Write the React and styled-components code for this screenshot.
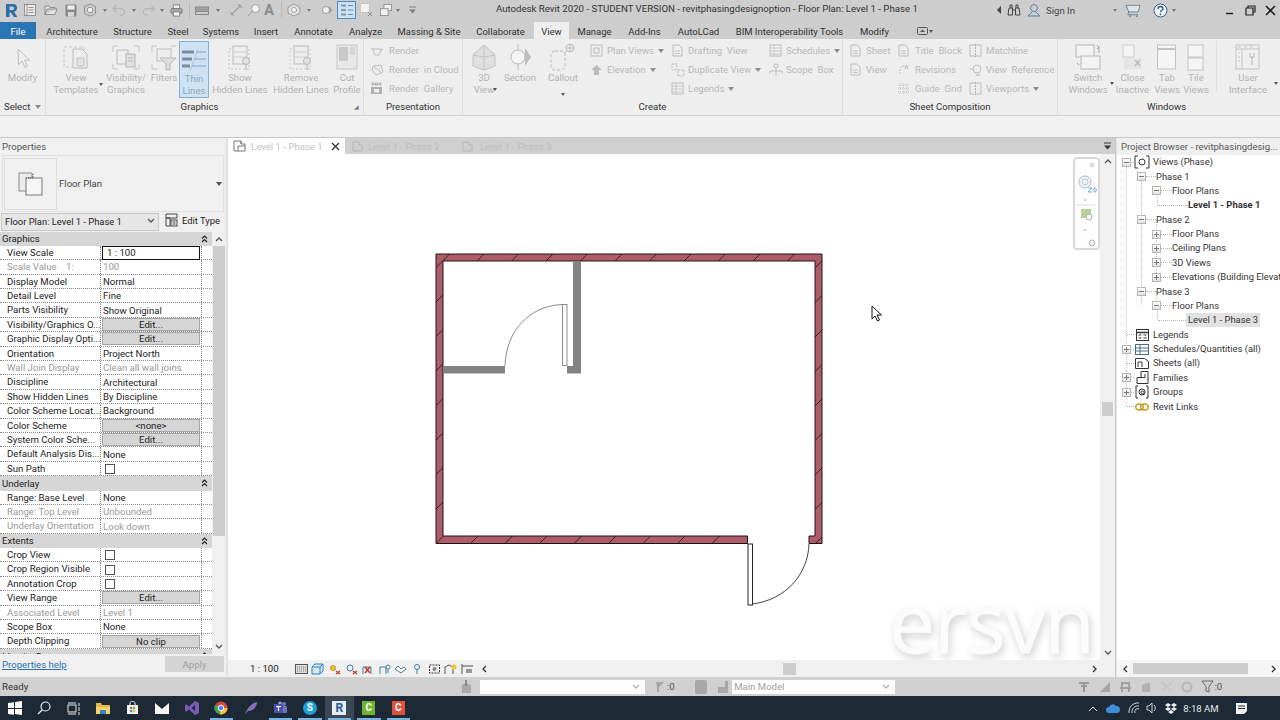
import React from 'react';
import styled, { createGlobalStyle } from 'styled-components';

const FONT = `Roboto, "Liberation Sans", sans-serif`;

const Global = createGlobalStyle`
  html, body { margin: 0; padding: 0; background: #f0f0f0; }
  body { font-family: ${FONT}; font-size: 9.600px; color: #222; overflow: hidden; }
  * { box-sizing: border-box; }
`;

const Page = styled.div`
  width: 1280px; height: 720px; display: flex; flex-direction: column; overflow: hidden;
`;

/* ---------- small drawing helper ---------- */
const Svg = ({ w = 14, h = 14, children, ...p }) => (
  <svg width={w} height={h} viewBox={`0 0 ${w} ${h}`} fill="none" {...p}>{children}</svg>
);

/* ---------- quick access icons ---------- */
const Q = {
  logo: () => <Svg w={13} h={15}><path d="M1 1h7c3 0 4 2 4 4s-1 3-3 4l3.500 5H9L6 9.500H4.500V14H1zM4.500 3.500v3.500H7.500c1.200 0 1.500-.800 1.500-1.800s-.5-1.700-1.500-1.700z" fill="#2a6da8"/></Svg>,
  list: () => <Svg w={12} h={12}><rect x=".5" y=".5" width="11" height="11" fill="#ececec" stroke="#8f8f8f"/><path d="M3 .5v11M4.500 3.500h5M4.500 6h5M4.500 8.500h5" stroke="#8f8f8f"/></Svg>,
  open: () => <Svg w={14} h={12}><path d="M1 10.500V2h4l1 1.500h5V5M1 10.500h10l2-5.500H3.200z" stroke="#8d8d8d" fill="#e3e3e3"/></Svg>,
  save: () => <Svg w={12} h={13}><rect x=".5" y=".5" width="11" height="12" rx="1" fill="#8a8a8a"/><rect x="2.500" y="1.500" width="7" height="4" fill="#efefef"/><rect x="3" y="8" width="6" height="4.500" fill="#d5d5d5"/></Svg>,
  cloud: () => <Svg w={14} h={14}><path d="M7 1l5.500 2.500v7L7 13l-5.500-2.500v-7z" fill="#cfcfcf" stroke="#909090"/><circle cx="7" cy="7" r="2.800" fill="#f2f2f2" stroke="#8d8d8d"/></Svg>,
  undo: () => <Svg w={14} h={12}><path d="M4 1L1 4.500 4 8M1.500 4.500H8c3 0 4.500 2 4.500 3.500S11 11.500 8 11.500" stroke="#b5b5b5" strokeWidth="1.300"/></Svg>,
  redo: () => <Svg w={14} h={12}><path d="M10 1l3 3.500L10 8M12.500 4.500H6C3 4.500 1.500 6.500 1.500 8S3 11.500 6 11.500" stroke="#b5b5b5" strokeWidth="1.300"/></Svg>,
  print: () => <Svg w={14} h={13}><rect x="3.500" y=".5" width="7" height="4" fill="#f3f3f3" stroke="#7c7c7c"/><rect x="1" y="4.500" width="12" height="5" rx="1" fill="#a9a9a9" stroke="#7c7c7c"/><rect x="3.500" y="8" width="7" height="4.500" fill="#f3f3f3" stroke="#7c7c7c"/></Svg>,
  measure: () => <Svg w={14} h={12}><rect x=".5" y="3" width="13" height="3" fill="#a6a6a6" stroke="#848484"/><rect x=".5" y="7.500" width="13" height="3" fill="#cdcdcd" stroke="#848484"/></Svg>,
  aligned: () => <Svg w={14} h={14}><path d="M2 12L12 2" stroke="#a4a4a4" strokeWidth="1.500"/><path d="M1 9l4 4M9 1l4 4" stroke="#8f8f8f"/></Svg>,
  tag: () => <Svg w={14} h={14}><circle cx="8.500" cy="5.500" r="4" stroke="#9c9c9c" fill="#f1f1f1"/><path d="M1 13l4.500-5" stroke="#9c9c9c"/></Svg>,
  letter: () => <LetterA>A</LetterA>,
  house: () => <Svg w={14} h={14}><path d="M7 1l6 3.500v5.500L7 13 1 10V4.500z" fill="#e4e4e4" stroke="#9a9a9a"/><circle cx="7" cy="7" r="2.500" stroke="#9a9a9a" fill="#fff"/></Svg>,
  diamond: () => <Svg w={12} h={14}><circle cx="5" cy="7" r="3.500" fill="#f4f4f4" stroke="#9a9a9a"/><path d="M8 3l3.500 4L8 11z" fill="#9f9f9f"/></Svg>,
  thin: () => <Svg w={14} h={14}><path d="M1 2.500h5M1 7h5M1 11.500h5" stroke="#7f98ae" strokeWidth="2"/><path d="M8 2.500h5M8 7h5M8 11.500h5" stroke="#5d8fbd"/></Svg>,
  closew: () => <Svg w={14} h={14}><rect x=".5" y=".5" width="9" height="9" fill="#f2f2f2" stroke="#b8b8b8" strokeDasharray="2 1"/><path d="M8 9l4 4M12 9l-4 4" stroke="#8d8d8d"/></Svg>,
  switchw: () => <Svg w={14} h={14}><rect x="4.500" y=".5" width="9" height="7" fill="#f2f2f2" stroke="#8d8d8d"/><rect x=".5" y="5.500" width="9" height="8" fill="#f2f2f2" stroke="#8d8d8d"/></Svg>,
  custom: () => <Svg w={9} h={8}><path d="M1 1h7" stroke="#7f7f7f"/><path d="M1 3.500h7L4.500 7.500z" fill="#7f7f7f"/></Svg>,
};

/* ---------- ribbon large icons ---------- */
const line = { stroke: '#bcbcbc', fill: '#ededed' };
const RI = {
  cursor: () => <Svg w={14} h={26}><path d="M2 4l.5 16 3.500-4 3 6.500 2.500-1.200-3-6 5-.3z" {...line}/></Svg>,
  templates: () => <Svg w={26} h={27}><rect x="1" y="3" width="20" height="20" stroke="#c8c8c8" strokeDasharray="3 2"/><path d="M10 5h9l5 5v14H10z" {...line}/><rect x="14" y="14" width="7" height="8" rx="1" stroke="#bdbdbd" fill="#e2e2e2"/></Svg>,
  visibility: () => <Svg w={28} h={27}><path d="M1 8V2h5M27 8V2h-5M1 20v5h5M27 20v5h-5" stroke="#c4c4c4"/><rect x="5" y="6" width="11" height="14" {...line}/><rect x="14" y="10" width="9" height="13" stroke="#b4b4b4" fill="#e0e0e0"/><path d="M16 14h5M16 17h5" stroke="#bcbcbc"/></Svg>,
  filters: () => <Svg w={26} h={27}><path d="M1 8V2h5M25 2h-5M1 20v5h5" stroke="#c4c4c4"/><rect x="6" y="5" width="14" height="12" {...line}/><path d="M9 14h16l-6 6v6h-4v-6z" stroke="#b9b9b9" fill="#dcdcdc"/></Svg>,
  thin: () => <Svg w={26} h={24}><path d="M1 4h12M1 11h10M1 18h8" stroke="#7d8b98" strokeWidth="3"/><path d="M15 4h10M13 11h12M11 18h14" stroke="#7fa4c4"/><path d="M17 1l-8 22" stroke="#a8c4dc"/></Svg>,
  show: () => <Svg w={28} h={27}><path d="M3 5h20v20H3z" stroke="#c6c6c6" strokeDasharray="2 2"/><rect x="7" y="2" width="14" height="18" {...line}/><path d="M7 8h14M7 13h14" stroke="#cfcfcf"/><circle cx="20" cy="17" r="3.500" fill="#e1e1e1" stroke="#b4b4b4"/><path d="M20 20.500V26" stroke="#b4b4b4"/></Svg>,
  cut: () => <Svg w={22} h={27}><rect x="1" y="1" width="20" height="24" fill="#e8e8e8" stroke="#c5c5c5"/><path d="M3 3h9v14H3z" fill="#c9c9c9"/><path d="M14 3h5v8h-5z" fill="#d6d6d6"/></Svg>,
  house3d: () => <Svg w={26} h={28}><path d="M13 2l11 10v11l-11 4-11-4V12z" fill="#dfdfdf" stroke="#c0c0c0"/><path d="M13 2v12L2 12M13 14l11-2M13 14v13" stroke="#c4c4c4"/></Svg>,
  section: () => <Svg w={24} h={28}><circle cx="10" cy="14" r="7" fill="#f4f4f4" stroke="#b9b9b9"/><path d="M17 5l6 9-6 9z" fill="#bdbdbd"/><path d="M10 1v6M10 21v6" stroke="#bdbdbd"/></Svg>,
  callout: () => <Svg w={26} h={28}><rect x="1" y="8" width="14" height="19" rx="4" stroke="#bcbcbc" strokeDasharray="3 2"/><path d="M14 10l5-4" stroke="#bcbcbc"/><circle cx="20" cy="5" r="4" {...line}/><path d="M16 5h8M20 1v8" stroke="#bcbcbc"/></Svg>,
  switchw: () => <Svg w={26} h={28}><rect x="1" y="2" width="18" height="12" fill="#f3f3f3" stroke="#b5b5b5"/><rect x="6" y="13" width="19" height="13" fill="#f3f3f3" stroke="#b5b5b5"/><path d="M22 2l2 2-2 2M24 4v6M2 20l2 2-2-2" stroke="#9f9f9f"/></Svg>,
  close: () => <Svg w={22} h={28}><rect x="1" y="2" width="11" height="12" fill="#f4f4f4" stroke="#cdcdcd"/><rect x="2" y="15" width="18" height="11" fill="#e5e5e5"/><path d="M13 17l5 6M18 17l-5 6" stroke="#bdbdbd" strokeWidth="1.500"/></Svg>,
  tab: () => <Svg w={22} h={28}><rect x="1.500" y="2" width="18" height="24" fill="#f5f5f5" stroke="#c2c2c2"/><path d="M1.500 6h18" stroke="#c2c2c2" strokeWidth="2"/></Svg>,
  tile: () => <Svg w={18} h={28}><rect x="1" y="2" width="15" height="12" fill="#f5f5f5" stroke="#c2c2c2"/><rect x="1" y="15" width="15" height="12" fill="#f5f5f5" stroke="#c2c2c2"/></Svg>,
  ui: () => <Svg w={26} h={28}><rect x="1" y="2" width="23" height="24" fill="#efefef" stroke="#c3c3c3"/><path d="M1 6h23M7 6v20" stroke="#c3c3c3"/><path d="M3 4h3M9 4h3M15 4h3M3 10h2M3 14h2M3 18h2" stroke="#c3c3c3"/><path d="M17 13v9M15 10v4l2 1 2-1v-4" stroke="#b4b4b4"/></Svg>,
};

/* ---------- ribbon small icons ---------- */
const S = {
  page: () => <Svg w={13} h={13}><path d="M2 1h6l3 3v8H2z" {...line}/><path d="M4 7h5M4 9.500h5" stroke="#c4c4c4"/></Svg>,
  teapot: () => <Svg w={14} h={12}><path d="M3 4h8l-1.500 6h-5zM1 3l3 2M11 5l2-1" {...line}/></Svg>,
  cloud: () => <Svg w={14} h={13}><path d="M3 3l8-1 2 7-7 3-4-5z" {...line}/><path d="M4 4l7 5" stroke="#bcbcbc"/></Svg>,
  gallery: () => <Svg w={13} h={13}><rect x="1" y="5" width="11" height="7" fill="#b0b0b0"/><path d="M2 1h2v2H2zM5.500 1h2v2h-2zM9 1h2v2H9z" stroke="#aaa"/><rect x="4" y="7" width="5" height="3.500" fill="#eee"/></Svg>,
  plan: () => <Svg w={13} h={13}><rect x="1" y="1" width="11" height="11" {...line}/><path d="M4 4h5v5H4z" stroke="#bcbcbc"/></Svg>,
  arrowUp: () => <Svg w={13} h={12}><path d="M6.500 1L12 6H9v5H4V6H1z" fill="#bcbcbc"/></Svg>,
  lines: () => <Svg w={13} h={13}><rect x="1" y="1" width="11" height="11" fill="#f1f1f1" stroke="#bcbcbc"/><path d="M1 4h11M1 7h11M1 10h11M5 1v11" stroke="#c8c8c8"/></Svg>,
  dup: () => <Svg w={14} h={14}><path d="M1 1h5v6H1zM7 7h6v6H7z" stroke="#bcbcbc" strokeDasharray="2 1"/></Svg>,
  scope: () => <Svg w={14} h={14}><circle cx="7" cy="3" r="2" stroke="#bcbcbc"/><path d="M7 5v8M1 8h12M1 8v3M13 8v3" stroke="#bcbcbc"/></Svg>,
  grid: () => <Svg w={13} h={13}><path d="M1 3h11M1 6.500h11M1 10h11M3 1v11M6.500 1v11M10 1v11" stroke="#c4c4c4" strokeDasharray="1 1"/></Svg>,
  rev: () => <Svg w={13} h={13}><path d="M3 11V6c0-2 2-3 5-3" stroke="#bcbcbc" strokeDasharray="2 1"/><path d="M8 6l1.500-4L11 6" stroke="#b4b4b4"/></Svg>,
  match: () => <Svg w={13} h={13}><rect x="1" y="1" width="11" height="11" {...line}/><path d="M6.500 0v13" stroke="#aeaeae" strokeDasharray="2 1"/></Svg>,
  viewRef: () => <Svg w={14} h={14}><circle cx="8" cy="6" r="4" {...line}/><path d="M1 6h3M7 12h4" stroke="#bcbcbc"/></Svg>,
  caret: () => <Svg w={6} h={4}><path d="M0 0h6L3 4z" fill="#8b8b8b"/></Svg>,
};

/* ---------- title bar ---------- */
const LetterA = styled.span`
  font: 700 15px ${FONT}; color: #8b8b8b;
`;
const TitleBar = styled.div`
  height: 22px; padding-bottom: 2px; background: #cdcdcd; display: flex; align-items: center; flex: none;
`;
const QatSlot = styled.div`
  width: ${p => p.$w}px; height: 20px; display: flex; align-items: center; justify-content: center; flex: none;
  margin-left: ${p => p.$ml || 0}px;
`;
const QatCaret = styled.i`
  display: block; width: 0; height: 0; border: 2.500px solid transparent; border-top: 3px solid #777; border-bottom: 0;
  margin-left: ${p => p.$ml || 0}px;
`;
const QatRule = styled.i`
  display: block; width: 1px; height: 16px; background: #b9b9b9;
`;
const QatSelected = styled.div`
  width: 19px; height: 18px; display: flex; align-items: center; justify-content: center;
  background: #cfe2f2; border: 1px solid #4b8cc4;
`;
const Title = styled.div`
  margin-left: ${p => p.$ml}px; width: 496px; padding-bottom: 4px; color: #333; font-size: 9.640px; white-space: nowrap; flex: none;
`;
const TopText = styled.span`
  color: #444; font-size: 9.600px; padding-top: 1px;
`;
const Win = styled.div`
  display: flex; align-items: center; margin-left: auto;
`;

const qatItems = [
  [11, <Q.logo />], [28, <Q.list />], [51, <Q.open />], [71, <Q.save />], [90, <Q.cloud />], [104, <QatCaret />],
  [119, <Q.undo />], [133, <QatCaret />], [148, <Q.redo />], [161, <QatCaret />], [176, <Q.print />], [189, <QatRule />],
  [200, <Q.measure />], [215, <QatCaret />], [232, <Q.aligned />], [250, <Q.tag />], [268, <Q.letter />], [281, <QatRule />],
  [292, <Q.house />], [307, <QatCaret />], [322, <Q.diamond />], [342, <QatSelected><Q.thin /></QatSelected>],
  [367, <Q.closew />], [386, <Q.switchw />], [398, <QatCaret />], [410, <Q.custom />],
];

function QuickBar() {
  let x = 0;
  return qatItems.map(([c, node], i) => {
    const half = i === qatItems.length - 1 ? 8 : Math.min((qatItems[i + 1][0] - c) / 2, 10);
    const left = c - half;
    const w = half * 2;
    const gapBefore = Math.max(0, left - x);
    x = Math.max(x, left) + w;
    return <QatSlot key={i} $w={w} $ml={gapBefore}>{node}</QatSlot>;
  });
}

const TopIcons = {
  binoc: () => <Svg w={14} h={14}><path d="M1 12l1-7h3.500v7H1zM8.500 12V5H12l1 7zM5.500 7h3M3 5V2h2v3M9 5V2h2v3" stroke="#444"/></Svg>,
  user: () => <Svg w={16} h={15}><circle cx="8" cy="5" r="3.500" stroke="#5b7fa0"/><path d="M6.500 8.500L2 13h12l-4.500-4.500" stroke="#5b7fa0"/></Svg>,
  cart: () => <Svg w={17} h={15}><path d="M1 2h15l-2 7H4z" stroke="#6d7f8d" fill="#dfe5e9"/><path d="M4 9l-1 3h11" stroke="#6d7f8d"/><circle cx="5.500" cy="13.500" r="1" fill="#6d7f8d"/><circle cx="12.500" cy="13.500" r="1" fill="#6d7f8d"/></Svg>,
  help: () => <Svg w={15} h={15}><circle cx="7.500" cy="7.500" r="6.500" fill="#f0f4f7" stroke="#38628a"/><path d="M5 6c0-1.500 1-2.500 2.500-2.500S10 4.500 10 5.800 7.500 7.500 7.500 9.200" stroke="#2f5e8d" strokeWidth="1.400"/><circle cx="7.500" cy="11.300" r=".9" fill="#2f5e8d"/></Svg>,
  min: () => <Svg w={10} h={10}><path d="M1 8.500h7" stroke="#222" strokeWidth="1.500"/></Svg>,
  restore: () => <Svg w={11} h={11}><path d="M3 3V1h7v6H8M1 3h7v7H1z" stroke="#222" strokeWidth="1.200"/></Svg>,
  x: () => <Svg w={11} h={11}><path d="M1 1l9 9M10 1l-9 9" stroke="#222" strokeWidth="1.600"/></Svg>,
};

/* ---------- tab row ---------- */
const TabRow = styled.div`
  height: 17px; background: #cdcdcd; display: flex; align-items: stretch; flex: none;
`;
const FileTab = styled.div`
  width: 36px; padding-top: 1px; background: #2a76b4; color: #fff; display: flex; align-items: center; justify-content: center; margin-right: 2px; font-size: 9.500px;
`;
const RibTab = styled.div`
  width: ${p => p.$w}px; padding-top: 1px; display: flex; align-items: center; justify-content: center; font-size: 9.500px;
  color: #303030; white-space: nowrap; background: ${p => (p.$on ? '#eeeeee' : 'transparent')};
`;
const CollapseSlot = styled.div`
  width: 54px; display: flex; align-items: center; justify-content: center; flex: none;
`;

/* ---------- ribbon ---------- */
const Ribbon = styled.div`
  height: 77px; background: #eeeeee; display: flex; flex: none; border-bottom: 1px solid #d2d2d2;
`;
const Panel = styled.div`
  width: ${p => p.$w}px; flex: none; display: flex; flex-direction: column; border-right: ${p => (p.$last ? 0 : '1px solid #dedede')};
`;
const PanelTools = styled.div`
  height: 59px; padding-top: 2px; padding-left: ${p => p.$pl || 0}px; display: flex;
`;
const PanelFooter = styled.div`
  position: relative; flex: 1; padding-right: ${p => p.$pr || 0}px; display: flex; align-items: center; justify-content: center; color: #333;
  width: ${p => (p.$w ? `${p.$w}px` : 'auto')};
`;
const Launcher = styled.span`
  position: absolute; right: 4px; top: 5px; color: #777; font-size: 6px;
`;
const BigTool = styled.div`
  position: relative; width: ${p => p.$w}px; margin-left: ${p => p.$ml || 0}px; height: 57px; flex: none; display: flex; flex-direction: column; align-items: center;
  ${p => p.$on && 'background: #cfe2f3; border: 1px solid #7fb0da;'}
`;
const BigIcon = styled.div`
  height: 31px; display: flex; align-items: flex-end; padding-bottom: 1px;
`;
const BigLabel = styled.div`
  line-height: 12px; text-align: center; white-space: nowrap; color: ${p => (p.$on ? '#8ba6bd' : '#b2b2b2')};
`;
const BigCaret = styled.i`
  position: absolute; right: ${p => p.$r ?? -3}px; top: ${p => p.$t ?? 42}px; border: 2px solid transparent; border-top: 3px solid #555; border-bottom: 0;
`;
const SmallCol = styled.div`
  width: ${p => p.$w}px; margin-left: ${p => p.$ml || 0}px; flex: none; display: flex; flex-direction: column;
`;
const SmallTool = styled.div`
  height: 19px; display: flex; align-items: center; white-space: pre; color: #b8b8b8;
`;
const SmallIcon = styled.span`
  width: ${p => p.$w || 17}px; flex: none; display: flex; align-items: center;
`;
const SmallCaret = styled.span`
  display: inline-flex; margin-left: 4px;
`;
const PanelRule = styled.div`
  width: 1px; height: 50px; background: #dedede; margin: 0 1px 0 5px;
`;
const SubBar = styled.div`
  height: 22px; background: #f0f0f0; flex: none; border-bottom: 1px solid #c9c9c9;
`;

const Big = ({ w, ml, icon, lines, on, caret, cr, ct }) => (
  <BigTool $w={w} $ml={ml} $on={on}>
    <BigIcon>{icon}</BigIcon>
    <BigLabel $on={on}>{lines.map((l, i) => <div key={i}>{l}</div>)}</BigLabel>
    {caret && <BigCaret $r={cr} $t={ct} />}
  </BigTool>
);
const Small = ({ icon, label, caret, iw }) => (
  <SmallTool>
    <SmallIcon $w={iw}>{icon}</SmallIcon>{label}
    {caret && <SmallCaret><S.caret /></SmallCaret>}
  </SmallTool>
);

/* ---------- body ---------- */
const Body = styled.div`
  flex: 1; display: flex; min-height: 0; background: #e4e4e4;
`;

/* properties */
const PropsPanel = styled.div`
  width: 228px; flex: none; background: #f0f0f0; display: flex; flex-direction: column; border-right: 2px solid #e2e2e2;
`;
const PanelTitle = styled.div`
  height: 17px; padding-left: 2px; display: flex; align-items: center; color: #555; white-space: nowrap; flex: none;
`;
const TypeBox = styled.div`
  height: 57px; margin: 0 2px 0 2px; border: 1px solid #e0e0e0; display: flex; align-items: center; position: relative; flex: none;
`;
const Thumb = styled.div`
  width: 53px; height: 52px; margin-left: 1px; border: 1px solid #dcdcdc; display: flex; align-items: center; justify-content: center;
`;
const TypeName = styled.div`
  margin-left: 2px; color: #444;
`;
const TypeCaret = styled.i`
  margin-left: auto; margin-right: 1px; border: 3px solid transparent; border-top: 4px solid #555; border-bottom: 0;
`;
const InstRow = styled.div`
  height: 19.500px; display: flex; align-items: center; flex: none; padding-left: 1px;
`;
const InstSelect = styled.div`
  width: 158px; height: 18px; background: #e6e6e6; border: 1px solid #c7c7c7; display: flex; align-items: center; padding: 0 3px 1px; color: #222; justify-content: space-between; font-size: 9.400px;
`;
const EditType = styled.div`
  display: flex; align-items: center; gap: 4px; margin-left: 6px; padding-bottom: 3px; color: #222; white-space: nowrap; font-size: 9.400px;
`;
const PropScroll = styled.div`
  height: 422px; display: flex; flex: none; overflow: hidden;
`;
const PropGrid = styled.div`
  width: 212px; flex: none;
`;
const SectionHead = styled.div`
  height: 14.400px; background: #d6d6d6; padding: 0 4px 0 2px; display: flex; align-items: center; justify-content: space-between; color: #222;
`;
const Row = styled.div`
  height: 14.400px; display: grid; grid-template-columns: 101px 101px 10px; background: #fff; border-bottom: 1px dotted #8a8a8a;
`;
const Label = styled.div`
  padding-left: 7px; line-height: 13px; white-space: pre; overflow: hidden; color: ${p => (p.$dim ? '#9a9a9a' : '#222')}; border-right: 1px dotted #8a8a8a;
`;
const Value = styled.div`
  padding-left: 2px; line-height: 13px; white-space: nowrap; color: ${p => (p.$dim ? '#9a9a9a' : '#222')}; border-right: 1px dotted #8a8a8a;
  display: flex; align-items: center;
`;
const Input = styled.div`
  width: 100%; height: 14px; background: #fff; border: 1px solid #111; margin-left: -1px; padding-left: 4px; line-height: 12px;
`;
const ValueBtn = styled.div`
  width: 100%; height: 13px; margin: 0 0 0 -1px; background: #d5d5d5; border: 1px solid #a5a5a5; text-align: center; line-height: 12px; color: #222;
`;
const Check = styled.div`
  width: 10px; height: 10px; margin: 1px 0 0 2px; border: 1px solid #555; background: #fff;
`;
const ScrollV = styled.div`
  width: 12px; margin-left: 1px; display: flex; flex-direction: column; align-items: center; flex: none;
`;
const ArrowBtn = styled.div`
  height: ${p => p.$h || 14}px; width: ${p => (p.$w ? `${p.$w}px` : '100%')}; flex: none; display: flex; align-items: center; justify-content: center;
`;
const ThumbV = styled.div`
  width: 100%; height: ${p => p.$h}px; background: #cdcdcd; flex: none;
`;
const PropFoot = styled.div`
  flex: 1; display: flex; align-items: center; padding: 0 2px 2px; justify-content: space-between;
`;
const Help = styled.span`
  color: #2b6fb0; text-decoration: underline;
`;
const Apply = styled.div`
  width: 59px; height: 16px; background: #d4d4d4; color: #9e9e9e; display: flex; align-items: center; justify-content: center;
`;

/* view */
const ViewArea = styled.div`
  flex: none; width: 888px; display: flex; flex-direction: column; background: #fff; border-right: 1px solid #c8c8c8;
`;
const ViewTabs = styled.div`
  height: 16px; flex: none; background: #cfcfcf; display: flex; align-items: stretch; position: relative;
`;
const ViewTab = styled.div`
  width: ${p => p.$w}px; padding-left: ${p => p.$pl}px; display: flex; align-items: center; gap: ${p => p.$gap || 5}px; flex: none; white-space: nowrap;
  background: ${p => (p.$on ? '#fff' : 'transparent')}; color: ${p => (p.$on ? '#c4c4c4' : '#bdbdbd')};
`;
const TabX = styled.span`
  margin-left: auto; margin-right: 5px; display: flex;
`;
const TabMenu = styled.div`
  margin-left: auto; width: 16px; display: flex; align-items: center; justify-content: center; 
`;
const ViewMid = styled.div`
  flex: 1; display: flex; min-height: 0;
`;
const Canvas = styled.div`
  position: relative; flex: 1; background: #fff; overflow: hidden;
`;
const PlanSvg = styled.svg`
  position: absolute; inset: 0;
`;
const NavBar = styled.div`
  position: absolute; left: 845px; top: 3px; width: 27px; height: 93px; border: 2px solid #d8d8d8; border-radius: 4px; background: #fdfdfd;
`;
const Watermark = styled.div`
  position: absolute; left: 661px; top: 417px; font: 400 82px "Open Sans", sans-serif; line-height: 100px; letter-spacing: -1px; color: #fbfbfb;
  -webkit-text-stroke: .8px #fbfbfb; text-shadow: 2px 4px 8px rgba(0,0,0,.22);
`;
const ScrollCol = styled.div`
  width: 15px; flex: none; display: flex; flex-direction: column; align-items: center; background: #f0f0f0;
`;
const Spacer = styled.div`
  height: ${p => p.$h}px; flex: none;
`;
const SpacerH = styled.div`
  width: ${p => p.$w}px; flex: none;
`;
const ThumbSq = styled.div`
  width: 11px; height: 14px; background: #cdcdcd; flex: none;
`;
const ViewBar = styled.div`
  height: 17px; flex: none; background: #f0f0f0; display: flex; align-items: center;
`;
const Scale = styled.div`
  width: 65px; padding-left: 22px; color: #222; flex: none;
`;
const VcSlot = styled.div`
  width: 16.600px; display: flex; justify-content: center; align-items: center; flex: none;
`;
const ThumbH = styled.div`
  width: ${p => p.$w}px; height: ${p => p.$h || 11}px; background: #cdcdcd; flex: none; margin-left: ${p => p.$ml || 0}px;
`;

/* browser */
const Browser = styled.div`
  flex: 1; background: #fff; display: flex; flex-direction: column; margin-left: 1px; min-width: 0;
`;
const BrowserTitle = styled(PanelTitle)`
  background: #f0f0f0; height: 17px; padding-left: 4px; color: #555; font-size: 9.500px;
`;
const Tree = styled.div`
  flex: 1; overflow: hidden; position: relative; font-size: 9.400px;
`;
const TreeRow = styled.div`
  height: 14.380px; display: flex; align-items: center; padding-left: ${p => p.$pad}px; white-space: nowrap; color: #333; position: relative;
`;
const Guide = styled.i`
  position: absolute; left: ${p => p.$x}px; top: ${p => p.$t}px; height: ${p => p.$h}px; border-left: 1px dotted #c4c4c4;
`;
const Exp = styled.div`
  width: 9px; height: 9px; flex: none; border: 1px solid #b5b5b5; background: linear-gradient(#fdfdfd, #e3e3e3); position: relative;
  &::before { content: ''; position: absolute; left: 1px; right: 1px; top: 3px; height: 1px; background: #777; }
  ${p => p.$plus && `&::after { content: ''; position: absolute; top: 1px; bottom: 1px; left: 3px; width: 1px; background: #777; }`}
`;
const Dash = styled.div`
  width: ${p => p.$w}px; height: 0; border-top: 1px dotted #b5b5b5; flex: none;
`;
const TreeIcon = styled.div`
  width: 16px; height: 14px; flex: none; display: flex; align-items: center; justify-content: center; margin-right: 3px;
`;
const TreeLabel = styled.div`
  font-weight: ${p => (p.$bold ? 700 : 400)}; background: ${p => (p.$sel ? '#e2e2e2' : 'transparent')};
  padding: 0 2px; margin-left: -2px; line-height: 14px;
`;
const BrowserBar = styled.div`
  height: 17px; flex: none; display: flex; align-items: center; background: #f5f5f5;
`;

/* status */
const Status = styled.div`
  height: 19px; flex: none; background: #d0d0d0; display: flex; align-items: center; padding-left: 2px; color: #333;
`;
const Combo = styled.div`
  width: ${p => p.$w}px; height: 14px; background: #fdfdfd; display: flex; align-items: center; justify-content: space-between; padding: 0 5px 0 2px; flex: none;
  color: #a3a3a3; margin-left: ${p => p.$ml || 0}px;
`;
const StSlot = styled.div`
  width: ${p => p.$w}px; margin-left: ${p => p.$ml || 0}px; flex: none; display: flex; align-items: center; justify-content: center; color: #555; white-space: nowrap;
`;

/* taskbar */
const Taskbar = styled.div`
  height: 24px; flex: none; background: #1d2a35; display: flex; align-items: stretch; color: #e5e9ec;
`;
const TaskSlot = styled.div`
  width: 29.500px; flex: none; display: flex; align-items: center; justify-content: center; position: relative;
  background: ${p => (p.$on ? '#3b4853' : 'transparent')};
  ${p => p.$run && `&::after { content: ''; position: absolute; left: 3px; right: 3px; bottom: 0; height: 2px; background: #79b4e0; }`}
`;
const Tray = styled.div`
  margin-left: auto; display: flex; align-items: center; padding-right: 18px;
`;
const TraySlot = styled.div`
  width: ${p => p.$w}px; display: flex; align-items: center; justify-content: center; flex: none; white-space: nowrap;
`;
const Pointer = styled.svg`
  position: absolute; left: 643px; top: 151px;
`;
const LetterTile = styled.span`
  width: ${p => p.$w || 13}px; height: 14px; background: ${p => p.$bg}; color: ${p => p.$fg || '#fff'}; font: 700 ${p => p.$s || 10}px ${FONT}; line-height: 14px; text-align: center;
  border-radius: ${p => p.$r || 0}px;
`;

/* ---------- data ---------- */
const tabs = [
  ['Architecture', 68], ['Structure', 53], ['Steel', 38], ['Systems', 48], ['Insert', 42], ['Annotate', 53], ['Analyze', 51], ['Massing & Site', 76],
  ['Collaborate', 67], ['View', 35, true], ['Manage', 51], ['Add-Ins', 49], ['AutoLCad', 59], ['BIM Interoperability Tools', 123], ['Modify', 47],
];

const H = 'h', B = 'btn', C = 'chk', I = 'input';
const props = [
  [H, 'Graphics'],
  ['View Scale', '1 : 100', I],
  ['Scale Value    1:', '100', 'dim'],
  ['Display Model', 'Normal'],
  ['Detail Level', 'Fine'],
  ['Parts Visibility', 'Show Original'],
  ['Visibility/Graphics O...', 'Edit...', B],
  ['Graphic Display Opti...', 'Edit...', B],
  ['Orientation', 'Project North'],
  ['Wall Join Display', 'Clean all wall joins', 'dim'],
  ['Discipline', 'Architectural'],
  ['Show Hidden Lines', 'By Discipline'],
  ['Color Scheme Locat...', 'Background'],
  ['Color Scheme', '<none>', B],
  ['System Color Sche...', 'Edit...', B],
  ['Default Analysis Dis...', 'None'],
  ['Sun Path', '', C],
  [H, 'Underlay'],
  ['Range: Base Level', 'None'],
  ['Range: Top Level', 'Unbounded', 'dim'],
  ['Underlay Orientation', 'Look down', 'dim'],
  [H, 'Extents'],
  ['Crop View', '', C],
  ['Crop Region Visible', '', C],
  ['Annotation Crop', '', C],
  ['View Range', 'Edit...', B],
  ['Associated Level', 'Level 1', 'dim'],
  ['Scope Box', 'None'],
  ['Depth Clipping', 'No clip', B],
  [H, 'Identity Data'],
];

const Chev2 = () => <Svg w={7} h={8}><path d="M1 3.500L3.500 1 6 3.500M1 7L3.500 4.500 6 7" stroke="#222" strokeWidth="1.100"/></Svg>;
const ChevUp = () => <Svg w={8} h={6}><path d="M1 5l3-3 3 3" stroke="#555" strokeWidth="1.300"/></Svg>;
const ChevDown = ({ c = '#555' }) => <Svg w={8} h={6}><path d="M1 1l3 3 3-3" stroke={c} strokeWidth="1.300"/></Svg>;
const ChevLeft = () => <Svg w={6} h={8}><path d="M5 1L2 4l3 3" stroke="#333" strokeWidth="1.300"/></Svg>;
const ChevRight = () => <Svg w={6} h={8}><path d="M1 1l3 3-3 3" stroke="#333" strokeWidth="1.300"/></Svg>;

/* tree icons */
const TI = {
  views: () => <Svg w={16} h={14}><path d="M4 1H1v12h3M12 1h3v12h-3" stroke="#333"/><circle cx="8" cy="7" r="3" stroke="#333"/></Svg>,
  legends: () => <Svg w={13} h={12}><rect x=".5" y=".5" width="12" height="11" fill="#fff" stroke="#333"/><path d="M.5 3.500h12" stroke="#333" strokeWidth="1.500"/><path d="M2.500 6h3M7.500 6h3M2.500 9h3M7.500 9h3" stroke="#333"/></Svg>,
  sched: () => <Svg w={14} h={11}><rect x=".5" y=".5" width="13" height="10" fill="#fff" stroke="#4b6c87"/><path d="M.5 4h13M.5 7h13M5 .5v10" stroke="#4b6c87"/></Svg>,
  sheets: () => <Svg w={14} h={12}><path d="M.5 1.500h9l4 3v7H.5z" fill="#fff" stroke="#333"/><path d="M3 10V5h4v5" stroke="#333"/></Svg>,
  fam: () => <Svg w={13} h={13}><path d="M1 6.500v6h11V.5H5v6zM5 6.500h4V3" stroke="#333" fill="#fff"/></Svg>,
  group: () => <Svg w={14} h={14}><path d="M3 1H1v12h2M11 1h2v12h-2" stroke="#333"/><circle cx="7" cy="7" r="3" stroke="#333"/><circle cx="7.500" cy="7.500" r="1.500" stroke="#333"/></Svg>,
  links: () => <Svg w={14} h={8}><ellipse cx="4.500" cy="4" rx="3.800" ry="3" stroke="#c79a1c" strokeWidth="1.500"/><ellipse cx="9.500" cy="4" rx="3.800" ry="3" stroke="#c79a1c" strokeWidth="1.500"/></Svg>,
};
const tree = [
  { pad: 5, exp: 'm', dash: 3, icon: <TI.views />, label: 'Views (Phase)' },
  { pad: 20, exp: 'm', dash: 10, label: 'Phase 1' },
  { pad: 35, exp: 'm', dash: 11, label: 'Floor Plans' },
  { pad: 41, dash: 30, label: 'Level 1 - Phase 1', bold: true },
  { pad: 20, exp: 'm', dash: 10, label: 'Phase 2' },
  { pad: 35, exp: 'p', dash: 11, label: 'Floor Plans' },
  { pad: 35, exp: 'p', dash: 11, label: 'Ceiling Plans' },
  { pad: 35, exp: 'p', dash: 11, label: '3D Views' },
  { pad: 35, exp: 'p', dash: 11, label: 'Elevations (Building Elevation)' },
  { pad: 20, exp: 'm', dash: 10, label: 'Phase 3' },
  { pad: 35, exp: 'm', dash: 11, label: 'Floor Plans' },
  { pad: 41, dash: 30, label: 'Level 1 - Phase 3', sel: true },
  { pad: 10, dash: 7, icon: <TI.legends />, label: 'Legends' },
  { pad: 5, exp: 'p', dash: 3, icon: <TI.sched />, label: 'Schedules/Quantities (all)' },
  { pad: 10, dash: 7, icon: <TI.sheets />, label: 'Sheets (all)' },
  { pad: 5, exp: 'p', dash: 3, icon: <TI.fam />, label: 'Families' },
  { pad: 5, exp: 'p', dash: 3, icon: <TI.group />, label: 'Groups' },
  { pad: 10, dash: 7, icon: <TI.links />, label: 'Revit Links' },
];
const ROW = 14.38;
const guides = [[9, 0, 17], [24, 1, 9], [39, 4, 4], [39, 9, 1], [40, 2, 1], [40, 10, 1]];

/* view control icons */
const VC = [
  <Svg w={13} h={10}><rect x=".5" y=".5" width="12" height="9" fill="#ddd" stroke="#555"/><path d="M2 3h9M2 5h9M2 7h9" stroke="#777" strokeDasharray="1 1"/></Svg>,
  <Svg w={13} h={12}><path d="M1 4h8v7H1zM1 4l3-3h8v7l-3 3M9 4l3-3" stroke="#2d7fb9" fill="#d8e9f4"/></Svg>,
  <Svg w={13} h={12}><circle cx="5" cy="5" r="2.500" fill="#f1c33f" stroke="#c5921d"/><path d="M8 8l4 3M12 8l-4 3" stroke="#c63b2d" strokeWidth="1.400"/></Svg>,
  <Svg w={13} h={12}><circle cx="5" cy="5" r="3" stroke="#3c7ca8"/><path d="M8 8l4 3M12 8l-4 3" stroke="#c63b2d" strokeWidth="1.400"/></Svg>,
  <Svg w={13} h={12}><path d="M2 11V4h8v7" stroke="#3c7ca8"/><path d="M4 4l5 6M9 4l-5 6" stroke="#c63b2d" strokeWidth="1.600"/></Svg>,
  <Svg w={13} h={12}><path d="M2 11V4h6v7" stroke="#3c7ca8"/><circle cx="10" cy="4" r="2" fill="#fff" stroke="#3c7ca8"/><path d="M10 6v4" stroke="#3c7ca8"/></Svg>,
  <Svg w={13} h={10}><path d="M1 5l3-3 3 3 3-2 2 2-5 4-3-2z" stroke="#4a7a9b" fill="#fff"/></Svg>,
  <Svg w={8} h={12}><circle cx="4" cy="4" r="2.500" stroke="#3c7ca8"/><path d="M4 6.500V11" stroke="#3c7ca8"/></Svg>,
  <Svg w={13} h={11}><rect x="1.500" y="2" width="10" height="8" stroke="#333" strokeDasharray="2 1"/><circle cx="6.500" cy="6" r="2" fill="#888"/></Svg>,
  <Svg w={13} h={12}><path d="M1 11V4l4-2 4 2v7" stroke="#555"/><circle cx="10" cy="4" r="2.500" fill="#f1c33f"/></Svg>,
  <Svg w={13} h={12}><path d="M1 1v10M1 3h11" stroke="#555"/><rect x="5" y="6" width="6" height="4" fill="#999"/></Svg>,
];

/* taskbar icons */
const T = {
  win: () => <Svg w={14} h={14}><path d="M0 2l6-.8V7H0zM7 1l7-1v7H7zM0 8h6v5.800L0 13zM7 8h7v6l-7-1z" fill="#fff"/></Svg>,
  search: () => <Svg w={14} h={14}><circle cx="8.500" cy="5.500" r="4.500" stroke="#e8e8e8" strokeWidth="1.200"/><path d="M5.300 8.700L1 13" stroke="#e8e8e8" strokeWidth="1.300"/></Svg>,
  task: () => <Svg w={14} h={13}><rect x="1" y="3" width="8" height="7" stroke="#e8e8e8"/><path d="M1 1h8M1 12h8M12 1v3M12 5v4M12 10v3" stroke="#e8e8e8"/></Svg>,
  folder: () => <Svg w={14} h={13}><path d="M0 1h5l1 2h8v9H0z" fill="#e9b949"/><rect x="0" y="5" width="14" height="7" fill="#f6d46a"/><rect x="4" y="8" width="6" height="4" fill="#3f80c0"/></Svg>,
  store: () => <Svg w={13} h={14}><path d="M1 4h11v9H1z" fill="#f4f4f4"/><path d="M4 4V2c0-1 1-1.500 2.500-1.500S9 1 9 2v2" stroke="#f4f4f4"/><rect x="4" y="6" width="2.200" height="2.200" fill="#e55b2c"/><rect x="7" y="6" width="2.200" height="2.200" fill="#7ab531"/><rect x="4" y="9" width="2.200" height="2.200" fill="#2f8fd8"/><rect x="7" y="9" width="2.200" height="2.200" fill="#f2b72c"/></Svg>,
  mail: () => <Svg w={14} h={11}><rect width="14" height="11" fill="#f4f4f4"/><path d="M0 0l7 6 7-6" fill="#1d2a35"/></Svg>,
  vs: () => <Svg w={14} h={14}><path d="M10 0l4 2v10l-4 2L4 8.500 1.500 10.500 0 10V4l1.500-.5L4 5.500zM10 4L6.500 7l3.500 3z" fill="#7d5cb8"/></Svg>,
  chrome: () => <Svg w={14} h={14}><circle cx="7" cy="7" r="6.500" fill="#d9483b"/><path d="M7 7L1 4a6.500 6.500 0 0 0 4.800 9.300z" fill="#3ba55c"/><path d="M7 7h6.500A6.500 6.500 0 0 1 5.800 13.300z" fill="#f5c33b"/><circle cx="7" cy="7" r="2.800" fill="#4285f4" stroke="#fff"/></Svg>,
  feather: () => <Svg w={14} h={14}><path d="M1 13C3 8 7 2 13 1c0 5-4 9-9 9z" fill="#8a6fb8"/></Svg>,
  teams: () => <Svg w={15} h={14}><circle cx="11" cy="3" r="2" fill="#6d77c0"/><rect x="8" y="5" width="6" height="7" rx="1" fill="#6d77c0"/><circle cx="7" cy="2.500" r="2" fill="#8a93d8"/><rect x="1" y="3" width="9" height="9" fill="#4b53a8"/><path d="M3 5.500h5M5.500 5.500V10" stroke="#fff" strokeWidth="1.200"/></Svg>,
};

/* floor plan drawing */
const WALL = 'M436 254H822V543.500H809V536H815V261H443V536H747.500V543.500H436Z';
const hatchSums = Array.from({ length: 20 }, (_, i) => 703.5 + i * 34.5);

function Plan() {
  return (
    <PlanSvg width="872" height="506" viewBox="228 154 872 506" fill="none">
      <defs><clipPath id="w"><path d={WALL} /></clipPath></defs>
      <path d={WALL} fill="#ad5c69" />
      <g clipPath="url(#w)">
        {hatchSums.map(s => <line key={s} x1={s - 560} y1={560} x2={s - 240} y2={240} stroke="#1d1012" strokeWidth=".8" />)}
      </g>
      <path d={WALL} stroke="#221214" strokeWidth="1" />
      <path d="M443 366H505V373.500H443ZM573 261H581V373.500H567V366H573Z" fill="#838383" />
      <rect x="562.500" y="304.500" width="4.500" height="61" fill="#fff" stroke="#8e8e8e" />
      <path d="M505 366C506 330 530 306 562 304.500" stroke="#8c8c8c" strokeWidth="1" />
      <rect x="748" y="544" width="4.500" height="61" fill="#fff" stroke="#222" />
      <path d="M752 604C786 600 808 574 809 544" stroke="#444" strokeWidth="1" />
    </PlanSvg>
  );
}

export default function App() {
  return (
    <Page>
      <Global />
      <TitleBar>
        <QuickBar />
        <Title $ml={76}>Autodesk Revit 2020 - STUDENT VERSION - revitphasingdesignoption - Floor Plan: Level 1 - Phase 1</Title>
        <QatSlot $w={14}><Svg w={5} h={8}><path d="M4 0v8L0 4z" fill="#444" /></Svg></QatSlot>
        <QatSlot $w={16}><TopIcons.binoc /></QatSlot>
        <QatSlot $w={24}><TopIcons.user /></QatSlot>
        <TopText>Sign In</TopText>
        <QatSlot $w={50}><QatCaret $ml={30} /></QatSlot>
        <QatSlot $w={16}><TopIcons.cart /></QatSlot>
        <QatSlot $w={38}><TopIcons.help /></QatSlot>
        <QatCaret $ml={-7} />
        <Win>
          <QatSlot $w={20}><TopIcons.min /></QatSlot>
          <QatSlot $w={20}><TopIcons.restore /></QatSlot>
          <QatSlot $w={20}><TopIcons.x /></QatSlot>
        </Win>
      </TitleBar>

      <TabRow>
        <FileTab>File</FileTab>
        {tabs.map(([t, w, on]) => <RibTab key={t} $w={w} $on={on}>{t}</RibTab>)}
        <CollapseSlot><Svg w={16} h={8}><rect x=".5" y=".5" width="10" height="7" rx="1" stroke="#555" /><path d="M3 5h5L5.500 2.500z" fill="#555" /><path d="M12 3h4l-2 3z" fill="#555" /></Svg></CollapseSlot>
      </TabRow>

      <Ribbon>
        <Panel $w={46}>
          <PanelTools>
            <Big w={45} icon={<RI.cursor />} lines={['Modify']} />
          </PanelTools>
          <PanelFooter>Select&nbsp;&nbsp;<S.caret /></PanelFooter>
        </Panel>
        <Panel $w={318}>
          <PanelTools $pl={4}>
            <Big w={52} icon={<RI.templates />} lines={['View', 'Templates']} caret cr={-1} />
            <Big w={48} icon={<RI.visibility />} lines={['Visibility/', 'Graphics']} />
            <Big w={28} icon={<RI.filters />} lines={['Filters']} />
            <Big w={30} ml={1} on icon={<RI.thin />} lines={['Thin', 'Lines']} />
            <Big w={62} icon={<RI.show />} lines={['Show', 'Hidden Lines']} />
            <Big w={60} icon={<RI.show />} lines={['Remove', 'Hidden Lines']} />
            <Big w={32} icon={<RI.cut />} lines={['Cut', 'Profile']} />
          </PanelTools>
          <PanelFooter $pr={10}>Graphics<Launcher>◢</Launcher></PanelFooter>
        </Panel>
        <Panel $w={99}>
          <PanelTools $pl={6}>
            <SmallCol $w={92}>
              <Small iw={19} icon={<S.teapot />} label="Render" />
              <Small iw={19} icon={<S.cloud />} label="Render  in Cloud" />
              <Small iw={19} icon={<S.gallery />} label="Render  Gallery" />
            </SmallCol>
          </PanelTools>
          <PanelFooter>Presentation</PanelFooter>
        </Panel>
        <Panel $w={380}>
          <PanelTools $pl={3}>
            <Big w={36} icon={<RI.house3d />} lines={['3D', 'View']} caret cr={5} ct={47} />
            <Big w={36} icon={<RI.section />} lines={['Section']} />
            <Big w={50} icon={<RI.callout />} lines={['Callout']} caret cr={23} ct={52} />
            <SmallCol $w={81} $ml={2}>
              <Small icon={<S.plan />} label="Plan Views" caret />
              <Small icon={<S.arrowUp />} label="Elevation" caret />
            </SmallCol>
            <SmallCol $w={98}>
              <Small icon={<S.page />} label="Drafting  View" />
              <Small icon={<S.dup />} label="Duplicate View" caret />
              <Small icon={<S.lines />} label="Legends" caret />
            </SmallCol>
            <SmallCol $w={72}>
              <Small icon={<S.lines />} label="Schedules" caret />
              <Small icon={<S.scope />} label="Scope  Box" />
            </SmallCol>
          </PanelTools>
          <PanelFooter>Create</PanelFooter>
        </Panel>
        <Panel $w={215}>
          <PanelTools $pl={6}>
            <SmallCol $w={48}>
              <Small icon={<S.page />} label="Sheet" />
              <Small icon={<S.page />} label="View" />
            </SmallCol>
            <SmallCol $w={72}>
              <Small iw={18} icon={<S.page />} label="Title  Block" />
              <Small iw={18} icon={<S.rev />} label="Revisions" />
              <Small iw={18} icon={<S.grid />} label="Guide  Grid" />
            </SmallCol>
            <SmallCol $w={88}>
              <Small icon={<S.match />} label="Matchline" />
              <Small icon={<S.viewRef />} label="View  Reference" />
              <Small icon={<S.match />} label="Viewports" caret />
            </SmallCol>
          </PanelTools>
          <PanelFooter>Sheet Composition</PanelFooter>
        </Panel>
        <Panel $w={222} $last>
          <PanelTools $pl={6}>
            <Big w={48} icon={<RI.switchw />} lines={['Switch', 'Windows']} caret cr={-2} ct={41} />
            <Big w={41} icon={<RI.close />} lines={['Close', 'Inactive']} />
            <Big w={28} icon={<RI.tab />} lines={['Tab', 'Views']} />
            <Big w={30} icon={<RI.tile />} lines={['Tile', 'Views']} />
            <PanelRule />
            <Big w={60} icon={<RI.ui />} lines={['User', 'Interface']} caret cr={0} ct={41} />
          </PanelTools>
          <PanelFooter $w={217}>Windows</PanelFooter>
        </Panel>
      </Ribbon>
      <SubBar />

      <Body>
        <PropsPanel>
          <PanelTitle>Properties</PanelTitle>
          <TypeBox>
            <Thumb>
              <Svg w={26} h={27}>
                <path d="M1 3h13v5h-4v13H1z" fill="#ececec" stroke="#888" />
                <rect x="8" y="8" width="16" height="17" fill="#f6f6f6" stroke="#777" />
                <path d="M8 8h7V3" stroke="#555" strokeDasharray="1 1" />
              </Svg>
            </Thumb>
            <TypeName>Floor Plan</TypeName>
            <TypeCaret />
          </TypeBox>
          <InstRow>
            <InstSelect>Floor Plan: Level 1 - Phase 1<ChevDown /></InstSelect>
            <EditType>
              <Svg w={13} h={14}><path d="M1 1h11v4H1zM1 5h4v8H1z" stroke="#444" /><rect x="6" y="7" width="6" height="6" stroke="#444" /><path d="M7.500 9h3M7.500 11h3" stroke="#444" /></Svg>
              Edit Type
            </EditType>
          </InstRow>
          <PropScroll>
            <PropGrid>
              {props.map((p, i) => {
                if (p[0] === H) return <SectionHead key={i}>{p[1]}<Chev2 /></SectionHead>;
                const [label, value, kind] = p;
                const dim = kind === 'dim';
                return (
                  <Row key={i}>
                    <Label $dim={dim}>{label}</Label>
                    <Value $dim={dim}>
                      {kind === I ? <Input>{value}</Input>
                        : kind === B ? <ValueBtn>{value}</ValueBtn>
                          : kind === C ? <Check />
                            : value}
                    </Value>
                    <div />
                  </Row>
                );
              })}
            </PropGrid>
            <ScrollV>
              <ArrowBtn><ChevUp /></ArrowBtn>
              <ThumbV $h={290} />
              <Spacer $h={104} />
              <ArrowBtn><ChevDown /></ArrowBtn>
            </ScrollV>
          </PropScroll>
          <PropFoot>
            <Help>Properties help</Help>
            <Apply>Apply</Apply>
          </PropFoot>
        </PropsPanel>

        <ViewArea>
          <ViewTabs>
            <ViewTab $on $w={117} $pl={5}>
              <Svg w={13} h={12}><path d="M1 1h7v3h4v7H1z" fill="#fff" stroke="#777" /><path d="M5 11V6h7M8 1v3" stroke="#777" /></Svg>
              Level 1 - Phase 1
              <TabX><Svg w={9} h={9}><path d="M1 1l7 7M8 1l-7 7" stroke="#333" strokeWidth="1.300" /></Svg></TabX>
            </ViewTab>
            <ViewTab $w={112} $pl={7}>
              <Svg w={11} h={11}><path d="M1 1h6v3h3v6H1z" stroke="#b5b5b5" /></Svg>
              Level 1 - Phase 2
            </ViewTab>
            <ViewTab $w={110} $pl={5} $gap={7}>
              <Svg w={11} h={11}><path d="M1 1h6v3h3v6H1z" stroke="#b5b5b5" /></Svg>
              Level 1 - Phase 3
            </ViewTab>
            <TabMenu><Svg w={9} h={8}><path d="M1 1h7" stroke="#333" /><path d="M1 3.500h7L4.500 7.500z" fill="#333" /></Svg></TabMenu>
          </ViewTabs>
          <ViewMid>
            <Canvas>
              <Plan />
              <NavBar>
                <Svg w={23} h={89}>
                  <circle cx="10" cy="23" r="6" stroke="#aebcc8" fill="#eef2f5" />
                  <circle cx="10" cy="23" r="3" stroke="#bccad4" />
                  <path d="M13 29h4l-4 4h4M19 29v4h1.500l1-2-1-2z" stroke="#5f9fd0" strokeWidth=".8" />
                  <path d="M10 42l-2-1.500h4z" fill="#bbb" />
                  <path d="M2 46h19" stroke="#ddd" />
                  <rect x="6" y="50" width="10" height="9" fill="#b6d19a" />
                  <circle cx="14" cy="58" r="3" fill="#fff" stroke="#aaa" />
                  <path d="M10 72l-2-1.500h4z" fill="#bbb" />
                  <circle cx="17" cy="84" r="3" fill="#eee" stroke="#bbb" />
                  <circle cx="17" cy="6" r="2.500" fill="#ddd" />
                </Svg>
              </NavBar>
              <Watermark>ersvn</Watermark>
              <Pointer width="12" height="17" viewBox="0 0 12 17">
                <path d="M1 1v13l3-3 2.500 5 2-1-2.500-5h4.500z" fill="#fff" stroke="#111" />
              </Pointer>
            </Canvas>
            <ScrollCol>
              <ArrowBtn><ChevUp /></ArrowBtn>
              <Spacer $h={234} />
              <ThumbSq />
              <Spacer $h={230} />
              <ArrowBtn><ChevDown /></ArrowBtn>
            </ScrollCol>
          </ViewMid>
          <ViewBar>
            <Scale>1 : 100</Scale>
            {VC.map((n, i) => <VcSlot key={i}>{n}</VcSlot>)}
            <VcSlot><ChevLeft /></VcSlot>
            <ThumbH $ml={291} $w={13} $h={12} />
            <SpacerH $w={296} />
            <ChevRight />
          </ViewBar>
        </ViewArea>

        <Browser>
          <BrowserTitle>Project Browser - revitphasingdesig...</BrowserTitle>
          <Tree>
            {guides.map(([x, from, n], i) => (
              <Guide key={i} $x={x} $t={from * ROW + 7} $h={n * ROW} />
            ))}
            {tree.map((r, i) => (
              <TreeRow key={i} $pad={r.pad}>
                {r.exp && <Exp $plus={r.exp === 'p'} />}
                <Dash $w={r.dash} />
                {r.icon && <TreeIcon>{r.icon}</TreeIcon>}
                <TreeLabel $bold={r.bold} $sel={r.sel}>{r.label}</TreeLabel>
              </TreeRow>
            ))}
          </Tree>
          <BrowserBar>
            <ArrowBtn $w={16}><ChevLeft /></ArrowBtn>
            <ThumbH $w={115} />
            <SpacerH $w={23} />
            <ChevRight />
          </BrowserBar>
        </Browser>
      </Body>

      <Status>
        Ready
        <StSlot $ml={430} $w={16}><Svg w={13} h={15}><path d="M2 14V6l4-2 5 2v8z" fill="#a9a9a9" /><path d="M6 1v6" stroke="#8b8b8b" strokeWidth="2" /></Svg></StSlot>
        <Combo $ml={6} $w={165}><span /><ChevDown c="#b5b5b5" /></Combo>
        <StSlot $ml={7} $w={25}><Svg w={12} h={13}><path d="M1 2h8L4 7v5H2V7z" fill="#a6a6a6" /></Svg>:0</StSlot>
        <StSlot $ml={17} $w={13}><Svg w={12} h={14}><rect width="12" height="14" rx="2" fill="#a8a8a8" /></Svg></StSlot>
        <StSlot $ml={9} $w={14}><Svg w={12} h={14}><path d="M1 7h7V1h3v12H1z" fill="#a8a8a8" /></Svg></StSlot>
        <Combo $ml={2} $w={163}>Main Model<ChevDown c="#b5b5b5" /></Combo>
        <StSlot $ml={179} $w={20.6}><Svg w={12} h={13}><path d="M1 3h10M3 6h6M6 2v10" stroke="#999" strokeWidth="2" /></Svg></StSlot>
        <StSlot $w={20.6}><Svg w={13} h={13}><path d="M1 12L11 2v10z" fill="#a5a5a5" /></Svg></StSlot>
        <StSlot $w={20.6}><Svg w={13} h={13}><path d="M3 12V3h7v9M1 8h11" stroke="#a0a0a0" strokeWidth="2" /></Svg></StSlot>
        <StSlot $w={20.6}><Svg w={13} h={13}><path d="M2 12V5l8-3v10z" fill="#b0b0b0" /></Svg></StSlot>
        <StSlot $w={20.6}><Svg w={13} h={13}><path d="M2 2l9 9M11 3l-2 2M3 10l2-2" stroke="#bcbcbc" strokeDasharray="1 1" strokeWidth="2" /></Svg></StSlot>
        <StSlot $w={20.6}><Svg w={12} h={12}><circle cx="6" cy="6" r="4.500" stroke="#b5b5b5" strokeWidth="2" /></Svg></StSlot>
        <StSlot $w={28}><Svg w={13} h={13}><path d="M1 1h11L8 6.500V12l-3-1V6.500z" stroke="#666" /></Svg>:0</StSlot>
      </Status>

      <Taskbar>
        <TaskSlot><T.win /></TaskSlot>
        <TaskSlot><T.search /></TaskSlot>
        <TaskSlot><T.task /></TaskSlot>
        <TaskSlot><T.folder /></TaskSlot>
        <TaskSlot><T.store /></TaskSlot>
        <TaskSlot><T.mail /></TaskSlot>
        <TaskSlot><T.vs /></TaskSlot>
        <TaskSlot $run><T.chrome /></TaskSlot>
        <TaskSlot><T.feather /></TaskSlot>
        <TaskSlot $run><T.teams /></TaskSlot>
        <TaskSlot $run><LetterTile $w={14} $r={7} $bg="#1a9fdc">S</LetterTile></TaskSlot>
        <TaskSlot $run $on><LetterTile $w={14} $s={12} $bg="#e6eef5" $fg="#245d92">R</LetterTile></TaskSlot>
        <TaskSlot $run><LetterTile $bg="#6fb52e">C</LetterTile></TaskSlot>
        <TaskSlot $run><LetterTile $bg="#e2513b">C</LetterTile></TaskSlot>
        <Tray>
          <TraySlot $w={20}><Svg w={10} h={7}><path d="M1 6l4-4 4 4" stroke="#e8e8e8" /></Svg></TraySlot>
          <TraySlot $w={20}><Svg w={14} h={9}><path d="M3 9a3 3 0 0 1 0-6 4 4 0 0 1 7-1 3.500 3.500 0 0 1 1 7z" fill="#3d8fdc" /></Svg></TraySlot>
          <TraySlot $w={21}><Svg w={12} h={12}><path d="M1 11a9 9 0 0 1 10-10M4 11a6 6 0 0 1 7-7M7 11a3 3 0 0 1 4-4" stroke="#cfd4d8" /></Svg></TraySlot>
          <TraySlot $w={16}><Svg w={12} h={12}><path d="M1 4h2l3-3v10L3 8H1zM8 3a4 4 0 0 1 0 6" stroke="#cfd4d8" /></Svg></TraySlot>
          <TraySlot $w={22}><Svg w={12} h={11}><path d="M3 0l3 2-3 2-3-2zM9 0l3 2-3 2-3-2zM3 4l3 2-3 2-3-2zM9 4l3 2-3 2-3-2zM3 9l3-2 3 2-3 2z" fill="#eef1f3" /></Svg></TraySlot>
          <TraySlot $w={38}>8:18 AM</TraySlot>
          <TraySlot $w={42}><Svg w={13} h={13}><path d="M1 1h11v8l-3 3H1z" fill="#eef1f3" /><path d="M3 4h7M3 6.500h7" stroke="#1d2a35" /></Svg></TraySlot>
        </Tray>
      </Taskbar>
    </Page>
  );
}
